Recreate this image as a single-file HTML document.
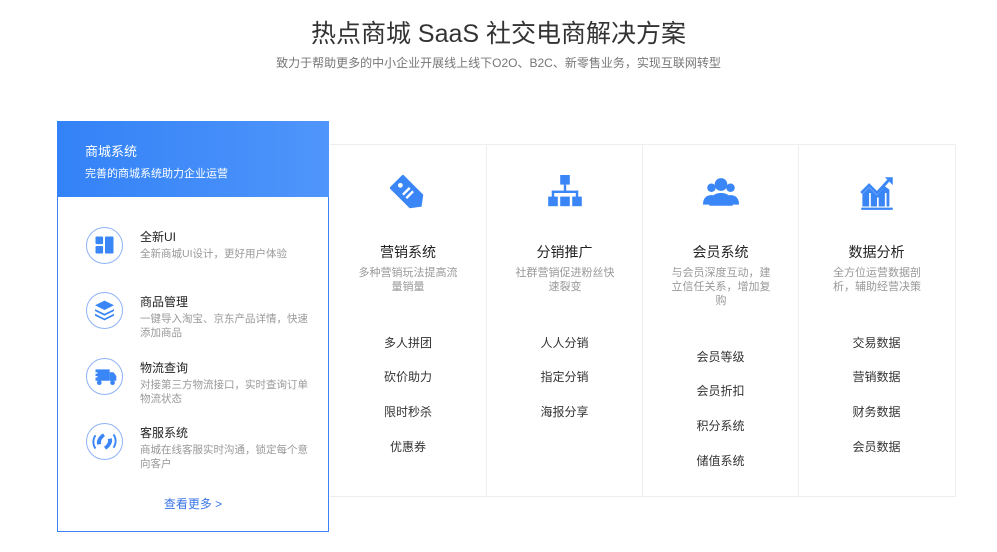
<!DOCTYPE html>
<html><head><meta charset="utf-8"><style>
*{margin:0;padding:0;box-sizing:border-box}
body{width:997px;height:552px;background:#fff;font-family:"Liberation Sans","Noto Sans CJK SC",sans-serif;position:relative;overflow:hidden;color:#333}
.abs{position:absolute}
h1{position:absolute;top:14px;left:0;width:997px;text-align:center;font-size:25px;font-weight:normal;color:#333}
.sub{top:54px;left:0;width:997px;text-align:center;font-size:12px;color:#777}
.grid{left:330px;top:144px;width:626px;height:353px;border:1px solid #eee;border-left:none}
.col{position:absolute;top:0;width:156px;height:352px;border-left:1px solid #eee;text-align:center}
.col .ic{position:absolute;left:60px;top:30px;width:36px;height:36px}
.col .t{position:absolute;top:97px;width:100%;font-size:14px;color:#222}
.col .d{position:absolute;top:121px;left:26px;width:104px;font-size:11px;line-height:14px;color:#999}
.col .it{position:absolute;width:100%;font-size:12px;color:#333}
.panel{left:57px;top:121px;width:272px;height:411px;border:1px solid #3b82f6;background:#fff}
.hd{position:absolute;left:-1px;top:-1px;width:272px;height:76px;background:linear-gradient(90deg,#3382f7,#4f95fb);color:#fff}
.row{position:absolute;left:28px;width:240px}
.circ{position:absolute;left:0;top:0;width:37px;height:37px;border:1px solid #8fb3f5;border-radius:50%}
.row .t{position:absolute;left:54px;top:3px;font-size:12px;color:#222;line-height:15px}
.row .d{position:absolute;left:54px;top:20px;width:170px;font-size:10.5px;line-height:14px;color:#999}
</style></head><body>
<h1>热点商城 SaaS 社交电商解决方案</h1>
<div class="abs sub">致力于帮助更多的中小企业开展线上线下O2O、B2C、新零售业务，实现互联网转型</div>

<div class="abs grid">
 <div class="col" style="left:0;border-left:none">
  <svg class="ic" viewBox="5 5 30 30"><g transform="rotate(-45 20 20)"><path d="M12 6h16v24l-8 6-8-6z" fill="#3a86f7"/><circle cx="20" cy="11" r="2" fill="#fff"/><rect x="16" y="17" width="8" height="2" fill="#fff"/><rect x="16" y="21" width="8" height="2" fill="#fff"/></g></svg>
  <div class="t">营销系统</div><div class="d">多种营销玩法提高流量销量</div>
  <div class="it" style="top:189px">多人拼团</div><div class="it" style="top:223px">砍价助力</div><div class="it" style="top:258px">限时秒杀</div><div class="it" style="top:293px">优惠券</div>
 </div>
 <div class="col" style="left:156px">
  <svg class="ic" viewBox="5 5 30 30" fill="#3a86f7"><rect x="16" y="5" width="8" height="8"/><rect x="19" y="13" width="2" height="6"/><rect x="9" y="18" width="22" height="2"/><rect x="9" y="18" width="2" height="6"/><rect x="29" y="18" width="2" height="6"/><rect x="6" y="23" width="8" height="8"/><rect x="16" y="23" width="8" height="8"/><rect x="26" y="23" width="8" height="8"/></svg>
  <div class="t">分销推广</div><div class="d">社群营销促进粉丝快速裂变</div>
  <div class="it" style="top:189px">人人分销</div><div class="it" style="top:223px">指定分销</div><div class="it" style="top:258px">海报分享</div>
 </div>
 <div class="col" style="left:312px">
  <svg class="ic" viewBox="3 4 34 32" fill="#3a86f7"><circle cx="11" cy="15" r="4"/><circle cx="29" cy="15" r="4"/><path d="M3 31c0-7 4-9 8-9s6 2 6 9z"/><path d="M23 31c0-7 2-9 6-9s8 2 8 9z"/><circle cx="20" cy="12" r="6"/><path d="M9 32c0-9 5-12 11-12s11 3 11 12z"/></svg>
  <div class="t">会员系统</div><div class="d">与会员深度互动，建立信任关系，增加复购</div>
  <div class="it" style="top:203px">会员等级</div><div class="it" style="top:237px">会员折扣</div><div class="it" style="top:272px">积分系统</div><div class="it" style="top:307px">储值系统</div>
 </div>
 <div class="col" style="left:468px">
  <svg class="ic" viewBox="4 5 32 32" fill="#3a86f7"><path d="M7 33V22l6-6 7 7 7-8 4 3v15z"/><path d="M6 21l7-7 7 7 10-11" stroke="#3a86f7" stroke-width="2.5" fill="none"/><path d="M27 7h7v7z"/><rect x="6" y="34" width="28" height="2"/><rect x="13" y="21" width="1.5" height="12" fill="#fff"/><rect x="20" y="25" width="1.5" height="8" fill="#fff"/><rect x="27" y="21" width="1.5" height="12" fill="#fff"/></svg>
  <div class="t">数据分析</div><div class="d">全方位运营数据剖析，辅助经营决策</div>
  <div class="it" style="top:189px">交易数据</div><div class="it" style="top:223px">营销数据</div><div class="it" style="top:258px">财务数据</div><div class="it" style="top:293px">会员数据</div>
 </div>
</div>

<div class="abs panel">
 <div class="hd"><div class="abs" style="left:28px;top:20px;font-size:13px">商城系统</div><div class="abs" style="left:28px;top:44px;font-size:11px">完善的商城系统助力企业运营</div></div>
 <div class="row" style="top:105px"><div class="circ"><svg width="35" height="35" viewBox="0 0 37 37" fill="#3a86f7"><rect x="9" y="9" width="8" height="8" rx="1"/><rect x="9" y="19" width="8" height="8" rx="1"/><rect x="19" y="9" width="9" height="18" rx="1"/></svg></div><div class="t">全新UI</div><div class="d">全新商城UI设计，更好用户体验</div></div>
 <div class="row" style="top:170px"><div class="circ"><svg width="35" height="35" viewBox="0 0 37 37" fill="#3a86f7"><path d="M18.5 8l10 5-10 5-10-5z"/><path d="M8.5 17l10 5 10-5v2l-10 5-10-5z"/><path d="M8.5 22l10 5 10-5v2l-10 5-10-5z"/></svg></div><div class="t">商品管理</div><div class="d">一键导入淘宝、京东产品详情，快速添加商品</div></div>
 <div class="row" style="top:236px"><div class="circ"><svg width="35" height="35" viewBox="0 0 37 37" fill="#3a86f7"><rect x="9" y="11" width="15" height="12"/><path d="M24 14h4l3 4v5h-7z"/><circle cx="13" cy="25" r="2.5"/><circle cx="27" cy="25" r="2.5"/><rect x="5" y="14" width="6" height="1.5" fill="#fff"/><rect x="5" y="18" width="6" height="1.5" fill="#fff"/></svg></div><div class="t">物流查询</div><div class="d">对接第三方物流接口，实时查询订单物流状态</div></div>
 <div class="row" style="top:301px"><div class="circ"><svg width="35" height="35" viewBox="0 0 37 37"><path d="M11 22c-2-4 2-10 6-12l2 3c-3 2-5 5-4 8z" fill="#3a86f7"/><path d="M26 15c2 4-2 10-6 12l-2-3c3-2 5-5 4-8z" fill="#3a86f7"/><path d="M9 26a12 12 0 0 1 0-14" stroke="#3a86f7" stroke-width="2" fill="none"/><path d="M28 11a12 12 0 0 1 0 14" stroke="#3a86f7" stroke-width="2" fill="none"/></svg></div><div class="t">客服系统</div><div class="d">商城在线客服实时沟通，锁定每个意向客户</div></div>
 <div class="abs" style="left:0;width:270px;top:373px;text-align:center;font-size:12px;color:#3a76e6">查看更多 &gt;</div>
</div>
</body></html>
